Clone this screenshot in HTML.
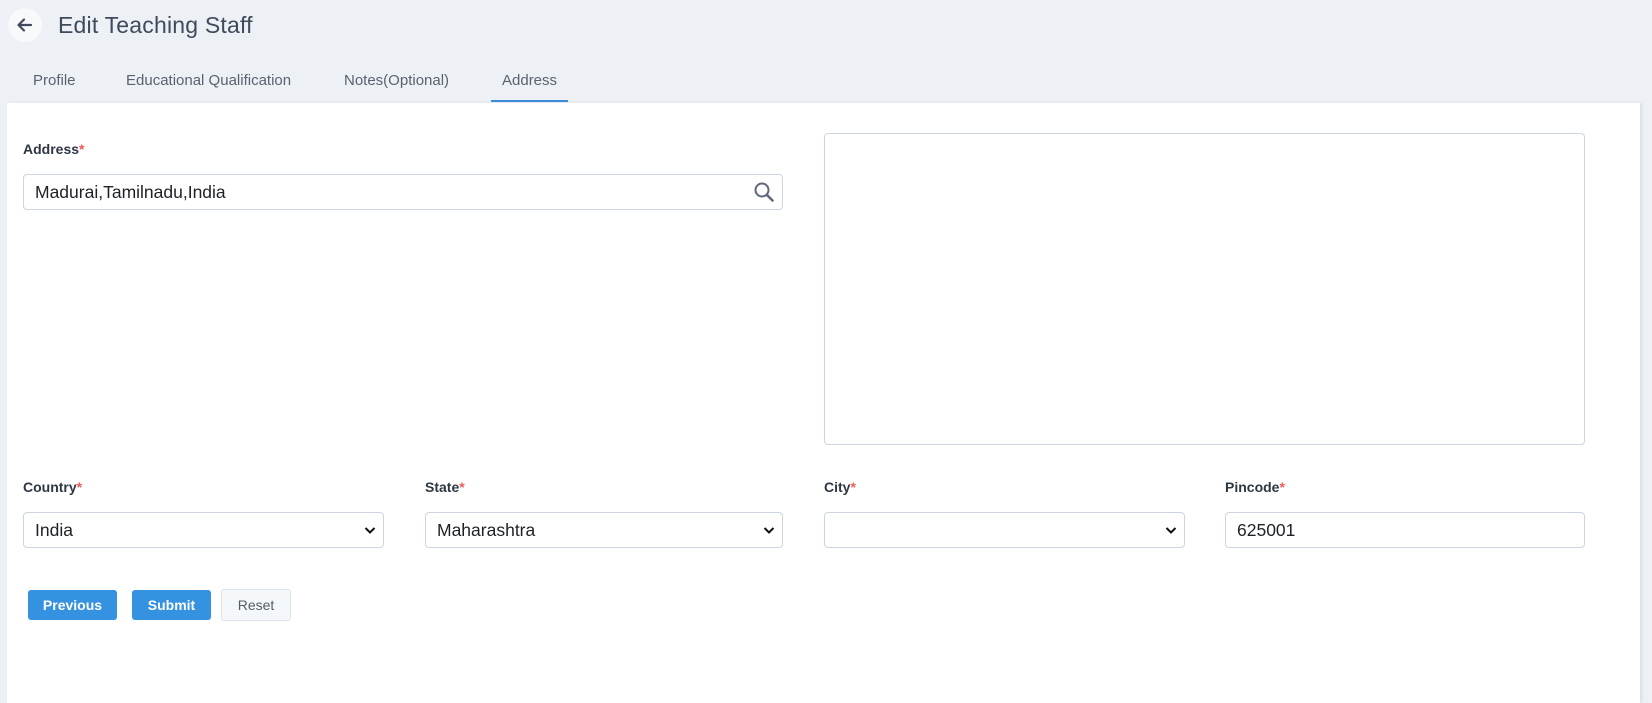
<!DOCTYPE html>
<html><head><meta charset="utf-8"><style>
*{box-sizing:border-box;margin:0;padding:0}
body{width:1652px;height:662px;background:#edf1f6;font-family:"Liberation Sans",sans-serif;position:relative;overflow:hidden}
.abs{position:absolute}
.back{left:8px;top:8px;width:34px;height:34px;border-radius:50%;background:#f7f9fb}
.title{left:58px;top:12px;font-size:23px;color:#3f4a5a;letter-spacing:0.2px}
.tab{top:72px;font-size:15px;color:#5a6270}
.ul{left:491px;top:100px;width:77px;height:2px;background:#3b8fd9}
.card{left:7px;top:103px;width:1633px;height:600px;background:#fff;box-shadow:2px 0 3px rgba(0,0,0,0.08)}
.lbl{font-size:14px;font-weight:bold;color:#2f3744}
.lbl span{color:#f05a5a}
.inp{border:1px solid #ccd5e0;border-radius:4px;background:#fff;font-size:17.5px;color:#1d2126;padding-left:11px;display:flex;align-items:center}
.btn{border-radius:3px;font-size:14px;font-weight:bold;color:#fff;background:#3592e0;display:flex;align-items:center;justify-content:center}
</style></head><body>
<div class="abs back"><svg width="34" height="34" viewBox="0 0 34 34"><path d="M23 17H11M16 11.5L10.5 17L16 22.5" stroke="#3f4a5a" stroke-width="2.2" fill="none" stroke-linecap="round" stroke-linejoin="round"/></svg></div>
<div class="abs title">Edit Teaching Staff</div>
<div class="abs tab" style="left:33px">Profile</div>
<div class="abs tab" style="left:126px">Educational Qualification</div>
<div class="abs tab" style="left:344px">Notes(Optional)</div>
<div class="abs tab" style="left:502px">Address</div>
<div class="abs ul"></div>
<div class="abs card"></div>
<div class="abs lbl" style="left:23px;top:141px">Address<span>*</span></div>
<div class="abs inp" style="left:23px;top:174px;width:760px;height:36px">Madurai,Tamilnadu,India</div>
<svg class="abs" style="left:753px;top:181px" width="22" height="22" viewBox="0 0 22 22"><circle cx="9" cy="9" r="6.5" stroke="#5d6878" stroke-width="2" fill="none"/><path d="M14 14L19.5 19.5" stroke="#5d6878" stroke-width="2.6" stroke-linecap="round"/></svg>
<div class="abs" style="left:824px;top:133px;width:761px;height:312px;border:1px solid #ccd5e0;border-radius:4px"></div>
<div class="abs lbl" style="left:23px;top:479px">Country<span>*</span></div>
<div class="abs lbl" style="left:425px;top:479px">State<span>*</span></div>
<div class="abs lbl" style="left:824px;top:479px">City<span>*</span></div>
<div class="abs lbl" style="left:1225px;top:479px">Pincode<span>*</span></div>
<div class="abs inp" style="left:23px;top:512px;width:361px;height:36px">India</div>
<div class="abs inp" style="left:425px;top:512px;width:358px;height:36px">Maharashtra</div>
<div class="abs inp" style="left:824px;top:512px;width:361px;height:36px"></div>
<div class="abs inp" style="left:1225px;top:512px;width:360px;height:36px">625001</div>
<svg class="abs" style="left:364px;top:525px" width="12" height="10"><path d="M1.5 3L6 7.5L10.5 3" stroke="#111" stroke-width="2" fill="none"/></svg>
<svg class="abs" style="left:763px;top:525px" width="12" height="10"><path d="M1.5 3L6 7.5L10.5 3" stroke="#111" stroke-width="2" fill="none"/></svg>
<svg class="abs" style="left:1165px;top:525px" width="12" height="10"><path d="M1.5 3L6 7.5L10.5 3" stroke="#111" stroke-width="2" fill="none"/></svg>
<div class="abs btn" style="left:28px;top:590px;width:89px;height:30px">Previous</div>
<div class="abs btn" style="left:132px;top:590px;width:79px;height:30px">Submit</div>
<div class="abs btn" style="left:221px;top:589px;width:70px;height:32px;background:#f5f8fb;border:1px solid #dde3ea;color:#555d68;font-weight:normal">Reset</div>
</body></html>
